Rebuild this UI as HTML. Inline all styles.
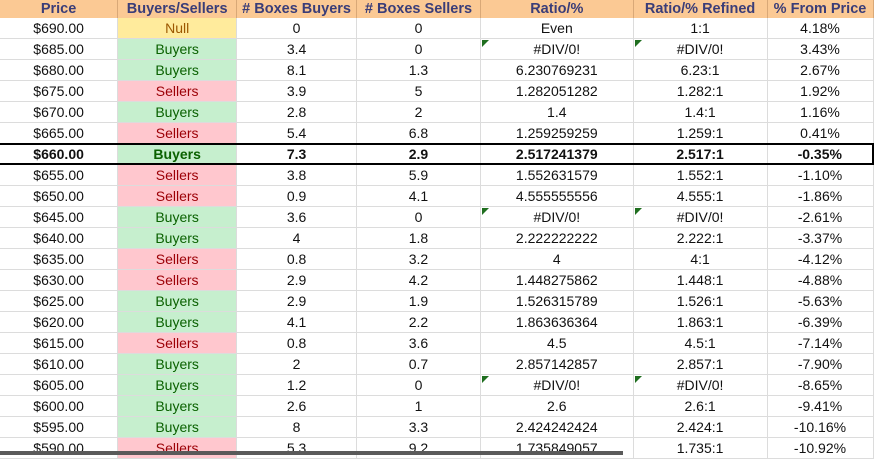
<!DOCTYPE html>
<html><head><style>
body{margin:0;width:874px;height:455px;overflow:hidden;background:#fff;font-family:"Liberation Sans",Arial,sans-serif;position:relative}
table{border-collapse:collapse;table-layout:fixed;position:absolute;left:0;top:0}
td,th{height:20px;padding:0;text-align:center;font-size:14px;color:#111;border-right:1px solid #dcdcdc;border-bottom:1px solid #dcdcdc;white-space:nowrap;position:relative;overflow:hidden}
th{height:18px;background:#fbc994;color:#3a3d78;font-weight:bold;font-size:14.5px;border-right:1px solid #d9a877;border-bottom:none}
.b{background:#c6efce;color:#0a6100}
.s{background:#ffc7ce;color:#9c0006}
.n{background:#ffeb9c;color:#9c5700}
tr.bold td{font-weight:bold;border-top:2px solid #000;border-bottom:2px solid #000;height:18px}
.t::before{content:"";position:absolute;left:1px;top:1px;border-top:7px solid #1f6e1f;border-right:7px solid transparent}
.bar{position:absolute;left:0;top:451px;width:623px;height:4px;background:#5a5a5a}
</style></head><body>
<table>
<colgroup><col style="width:118px"><col style="width:119px"><col style="width:120px"><col style="width:124px"><col style="width:153px"><col style="width:134px"><col style="width:106px"></colgroup>
<tr><th>Price</th><th>Buyers/Sellers</th><th># Boxes Buyers</th><th># Boxes Sellers</th><th>Ratio/%</th><th>Ratio/% Refined</th><th>% From Price</th></tr>
<tr><td>$690.00</td><td class="n">Null</td><td>0</td><td>0</td><td>Even</td><td>1:1</td><td>4.18%</td></tr>
<tr><td>$685.00</td><td class="b">Buyers</td><td>3.4</td><td>0</td><td class="t">#DIV/0!</td><td class="t">#DIV/0!</td><td>3.43%</td></tr>
<tr><td>$680.00</td><td class="b">Buyers</td><td>8.1</td><td>1.3</td><td>6.230769231</td><td>6.23:1</td><td>2.67%</td></tr>
<tr><td>$675.00</td><td class="s">Sellers</td><td>3.9</td><td>5</td><td>1.282051282</td><td>1.282:1</td><td>1.92%</td></tr>
<tr><td>$670.00</td><td class="b">Buyers</td><td>2.8</td><td>2</td><td>1.4</td><td>1.4:1</td><td>1.16%</td></tr>
<tr><td>$665.00</td><td class="s">Sellers</td><td>5.4</td><td>6.8</td><td>1.259259259</td><td>1.259:1</td><td>0.41%</td></tr>
<tr class="bold"><td>$660.00</td><td class="b">Buyers</td><td>7.3</td><td>2.9</td><td>2.517241379</td><td>2.517:1</td><td style="border-right:2px solid #000">-0.35%</td></tr>
<tr><td>$655.00</td><td class="s">Sellers</td><td>3.8</td><td>5.9</td><td>1.552631579</td><td>1.552:1</td><td>-1.10%</td></tr>
<tr><td>$650.00</td><td class="s">Sellers</td><td>0.9</td><td>4.1</td><td>4.555555556</td><td>4.555:1</td><td>-1.86%</td></tr>
<tr><td>$645.00</td><td class="b">Buyers</td><td>3.6</td><td>0</td><td class="t">#DIV/0!</td><td class="t">#DIV/0!</td><td>-2.61%</td></tr>
<tr><td>$640.00</td><td class="b">Buyers</td><td>4</td><td>1.8</td><td>2.222222222</td><td>2.222:1</td><td>-3.37%</td></tr>
<tr><td>$635.00</td><td class="s">Sellers</td><td>0.8</td><td>3.2</td><td>4</td><td>4:1</td><td>-4.12%</td></tr>
<tr><td>$630.00</td><td class="s">Sellers</td><td>2.9</td><td>4.2</td><td>1.448275862</td><td>1.448:1</td><td>-4.88%</td></tr>
<tr><td>$625.00</td><td class="b">Buyers</td><td>2.9</td><td>1.9</td><td>1.526315789</td><td>1.526:1</td><td>-5.63%</td></tr>
<tr><td>$620.00</td><td class="b">Buyers</td><td>4.1</td><td>2.2</td><td>1.863636364</td><td>1.863:1</td><td>-6.39%</td></tr>
<tr><td>$615.00</td><td class="s">Sellers</td><td>0.8</td><td>3.6</td><td>4.5</td><td>4.5:1</td><td>-7.14%</td></tr>
<tr><td>$610.00</td><td class="b">Buyers</td><td>2</td><td>0.7</td><td>2.857142857</td><td>2.857:1</td><td>-7.90%</td></tr>
<tr><td>$605.00</td><td class="b">Buyers</td><td>1.2</td><td>0</td><td class="t">#DIV/0!</td><td class="t">#DIV/0!</td><td>-8.65%</td></tr>
<tr><td>$600.00</td><td class="b">Buyers</td><td>2.6</td><td>1</td><td>2.6</td><td>2.6:1</td><td>-9.41%</td></tr>
<tr><td>$595.00</td><td class="b">Buyers</td><td>8</td><td>3.3</td><td>2.424242424</td><td>2.424:1</td><td>-10.16%</td></tr>
<tr><td>$590.00</td><td class="s">Sellers</td><td>5.3</td><td>9.2</td><td>1.735849057</td><td>1.735:1</td><td>-10.92%</td></tr>
</table>
<div class="bar"></div>
</body></html>
